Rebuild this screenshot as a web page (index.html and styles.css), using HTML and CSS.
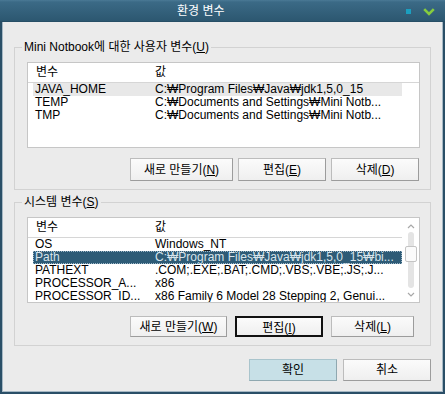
FILE: index.html
```html
<!DOCTYPE html>
<html lang="ko">
<head>
<meta charset="utf-8">
<link rel="stylesheet" href="styles.css">
</head>
<body>
<div class="window">
  <div class="titlebar">
    <span class="title">환경 변수</span>
    <span class="spacer"></span>
    <span class="dot"></span>
    <svg class="chev" width="12" height="8" viewBox="0 0 12 8"><polyline points="1.2,1.2 6,6 10.8,1.2" fill="none" stroke="#86cc3e" stroke-width="2.6"/></svg>
  </div>
  <div class="body">
    <fieldset class="group">
      <legend>Mini Notbook에 대한 사용자 변수(<u>U</u>)</legend>
      <div class="list">
        <div class="main">
          <div class="hdr full"><span class="c1">변수</span><span class="c2">값</span></div>
          <div class="rows">
            <div class="row soft"><span class="c1">JAVA_HOME</span><span class="c2">C:₩Program Files₩Java₩jdk1,5,0_15</span></div>
            <div class="row"><span class="c1">TEMP</span><span class="c2">C:₩Documents and Settings₩Mini Notb...</span></div>
            <div class="row"><span class="c1">TMP</span><span class="c2">C:₩Documents and Settings₩Mini Notb...</span></div>
          </div>
        </div>
      </div>
      <div class="btns">
        <button class="btn wide">새로 만들기(<u>N</u>)</button>
        <button class="btn">편집(<u>E</u>)</button>
        <button class="btn">삭제(<u>D</u>)</button>
      </div>
    </fieldset>
    <fieldset class="group g2">
      <legend>시스템 변수(<u>S</u>)</legend>
      <div class="list">
        <div class="main">
          <div class="hdr"><span class="c1">변수</span><span class="c2">값</span></div>
          <div class="rows">
            <div class="row"><span class="c1">OS</span><span class="c2">Windows_NT</span></div>
            <div class="row sel"><span class="c1">Path</span><span class="c2">C:₩Program Files₩Java₩jdk1,5,0_15₩bi...</span></div>
            <div class="row"><span class="c1">PATHEXT</span><span class="c2">.COM;.EXE;.BAT;.CMD;.VBS;.VBE;.JS;.J...</span></div>
            <div class="row"><span class="c1">PROCESSOR_A...</span><span class="c2">x86</span></div>
            <div class="row"><span class="c1">PROCESSOR_ID...</span><span class="c2">x86 Family 6 Model 28 Stepping 2, Genui...</span></div>
          </div>
        </div>
        <div class="scroll">
          <svg class="arrow" width="8" height="5" viewBox="0 0 8 5"><polyline points="1,4 4,1 7,4" fill="none" stroke="#a8a8a8" stroke-width="1.2"/></svg>
          <div class="track"><div class="thumb"></div></div>
          <svg class="arrow" width="8" height="5" viewBox="0 0 8 5"><polyline points="1,1 4,4 7,1" fill="none" stroke="#a8a8a8" stroke-width="1.2"/></svg>
        </div>
      </div>
      <div class="btns b2">
        <button class="btn wide2">새로 만들기(<u>W</u>)</button>
        <button class="btn focus">편집(<u>I</u>)</button>
        <button class="btn narrow">삭제(<u>L</u>)</button>
      </div>
    </fieldset>
    <div class="footer">
      <button class="btn ok">확인</button>
      <button class="btn">취소</button>
    </div>
  </div>
</div>
</body>
</html>
```

FILE: styles.css
```css
* { box-sizing: border-box; }
html, body { margin: 0; padding: 0; }
body {
  width: 445px;
  height: 394px;
  overflow: hidden;
  font-family: "Liberation Sans", "Noto Sans CJK KR", sans-serif;
  font-size: 12px;
  color: #000;
}
u { text-decoration: underline; text-underline-offset: 1px; }

.window {
  width: 445px;
  height: 394px;
  display: flex;
  flex-direction: column;
  background: #2a4f67;
  padding: 0 2px 2px 2px;
}

.titlebar {
  height: 22px;
  margin: 0 -2px;
  display: flex;
  align-items: center;
  background: linear-gradient(#4a7995 0px, #3b6a86 2px, #2c5770 21px, #22465c 22px);
  color: #fff;
  padding-left: 177px;
  padding-right: 10px;
}
.title { font-size: 12px; line-height: 22px; }
.spacer { flex: 1; }
.dot {
  width: 5px;
  height: 5px;
  background: #1b9fc0;
  margin-right: 12px;
  margin-top: 1px;
}
.chev { display: block; margin-top: 1px; }

.body {
  flex: 1;
  background: #ebebeb;
  border: 1px solid #a6b8c4;
  border-top: none;
  padding: 18px 11px 0 11px;
  display: flex;
  flex-direction: column;
}

.group {
  margin: 0;
  padding: 0 10px 8px 12px;
  border: 1px solid #d2d2d2;
  min-width: 0;
}
.group legend {
  padding: 0 2px;
  margin-left: -5px;
  line-height: 15px;
  font-size: 12px;
}
.g2 { margin-top: 5px; }

.list {
  margin-top: 7px;
  height: 86px;
  border: 1px solid #c6c6c6;
  background: #fff;
  display: flex;
  overflow: hidden;
}
.main { flex: 1; min-width: 0; display: flex; flex-direction: column; }
.hdr {
  height: 20px;
  flex: none;
  border-bottom: 1px solid #d6d6d6;
  display: flex;
  align-items: center;
  padding-left: 8px;
  line-height: 19px;
}
.hdr .c1 { width: 119px; }
.rows { margin-left: 5px; width: 369px; }
.row {
  height: 13px;
  line-height: 13px;
  padding-left: 2px;
  display: flex;
  white-space: nowrap;
}
.row .c1 { width: 120px; flex: none; }
.row.soft { background: #e8e8e8; }
.row.sel {
  background: #2e5b76;
  color: #d7e4ec;
  outline: 1px dotted #9fb8c8;
  outline-offset: -1px;
}

.scroll {
  width: 17px;
  flex: none;
  display: flex;
  flex-direction: column;
  align-items: center;
  padding: 6px 0 5px 0;
}
.arrow { display: block; flex: none; }
.track {
  flex: 1;
  width: 6px;
  margin: 3px 0 4px 0;
  background: #e4e4e4;
  border-radius: 3px;
  position: relative;
}
.thumb {
  position: absolute;
  left: -3px;
  top: 14px;
  width: 12px;
  height: 16px;
  background: #fbfbfb;
  border: 1px solid #c4c4c4;
  border-radius: 2px;
}

.btns {
  display: flex;
  justify-content: flex-end;
  gap: 5px;
  margin-top: 10px;
  padding-right: 1px;
}
.btn {
  font-family: "Liberation Sans", "Noto Sans CJK KR", sans-serif;
  font-size: 12px;
  color: #000;
  height: 23px;
  width: 88px;
  padding: 0;
  border: 1px solid #bcbcbc;
  border-right-color: #9c9c9c;
  border-bottom-color: #9c9c9c;
  background: linear-gradient(#fbfbfb, #efefef);
  line-height: 20px;
}
.btn.wide { width: 103px; }
.b2 { margin-top: 13px; gap: 8px; padding-right: 6px; }
.b2 .btn { height: 21px; }
.btn.wide2 { width: 97px; }
.btn.narrow { width: 83px; }
.btn.focus { border: 2px solid #111; }

.footer {
  display: flex;
  justify-content: flex-end;
  gap: 6px;
  margin-top: 13px;
  padding-right: 0;
}
.footer .btn { height: 22px; }
.btn.ok {
  background: #c7e0e7;
  border-color: #a9c4cc;
  border-right-color: #8fa8b0;
  border-bottom-color: #8fa8b0;
}
```
